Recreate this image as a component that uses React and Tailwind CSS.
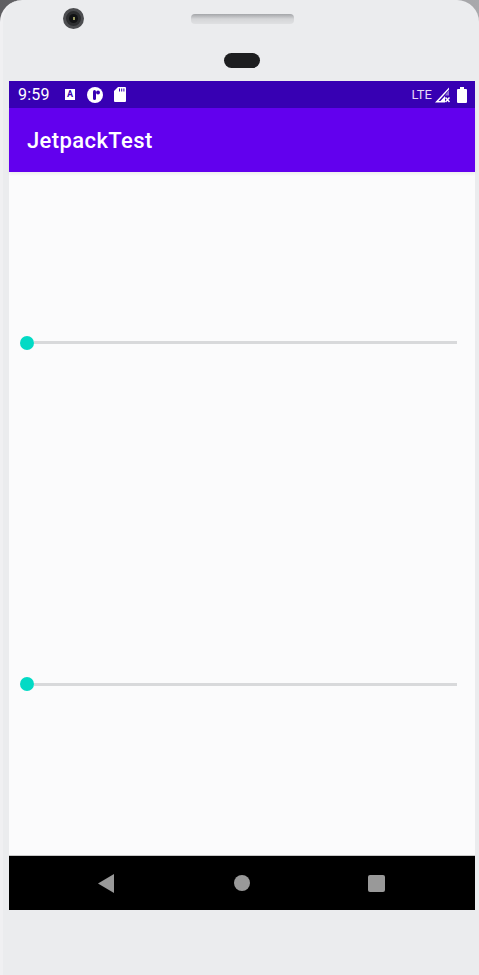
export default function App() {
  return (
    <div className="w-[479px] h-[975px] overflow-hidden bg-gradient-to-r from-[#5f5f62] to-[#a9a9ac] font-['Roboto',sans-serif]">
      <div className="flex flex-col h-full rounded-t-[22px] bg-[#ebecee] border-l-[3px] border-[#f0f0f2]">
        <TopBezel />
        {/* device screen */}
        <div className="flex flex-col h-[829px] ml-[6px] mr-[4px]">
          <StatusBar />
          <div className="relative z-10 flex items-center h-[64px] pl-[18px] bg-[#6200ee] text-white text-[22px] font-medium tracking-[0.4px] shadow-[0_2px_3px_rgba(0,0,0,0.06)]">
            JetpackTest
          </div>
          <div className="flex flex-col flex-1 bg-[#fbfbfc]">
            <SliderRow />
            <SliderRow />
          </div>
          <NavBar />
        </div>
      </div>
    </div>
  );
}

function TopBezel() {
  return (
    <div className="flex flex-col items-center h-[81px] shrink-0">
      <div className="flex w-full h-[53px]">
        <div className="ml-[60px] mt-[8px] w-[21px] h-[21px] rounded-full bg-[#2c2d2f] border-[3px] border-[#4c4d50] flex items-center justify-center">
          <div className="w-[9px] h-[9px] rounded-full bg-[#111214] flex items-center justify-center">
            <div className="w-[2px] h-[3px] bg-[#9a9a60]" />
          </div>
        </div>
        <div className="ml-[107px] mt-[14px] w-[103px] h-[10px] rounded-[4px] bg-gradient-to-b from-[#a4a6a9] via-[#d5d6d8] to-[#dfe0e2]" />
      </div>
      <div className="w-[36px] h-[15px] ml-[2px] rounded-full bg-[#1d1e20]" />
    </div>
  );
}

function StatusBar() {
  return (
    <div className="flex items-center h-[27px] pl-[9px] pr-[8px] bg-[#3700b3] text-white">
      <span className="w-[47px] text-[16px] leading-none tracking-[0.2px]">9:59</span>
      {/* A notification */}
      <div className="flex items-center justify-center w-[10px] h-[11px] bg-white text-[#3700b3] text-[9px] font-bold leading-none">
        A
      </div>
      <svg className="ml-[12px]" width="16" height="16" viewBox="0 0 16 16">
        <circle cx="8" cy="8" r="8" fill="#fff" />
        <rect x="6" y="3" width="3" height="10" rx="1.5" fill="#3700b3" />
        <circle cx="11" cy="5.5" r="2" fill="#3700b3" />
      </svg>
      <svg className="ml-[11px]" width="12" height="15" viewBox="0 0 12 15">
        <path d="M4 0h7a1 1 0 0 1 1 1v13a1 1 0 0 1-1 1H1a1 1 0 0 1-1-1V4z" fill="#fff" />
        <path d="M5 1.5h1v3H5zM7.2 1.5h1v3h-1zM9.4 1.5h1v3h-1z" fill="#3700b3" />
      </svg>
      <span className="ml-auto text-[13px] leading-none text-[#e4daf7]">LTE</span>
      <svg className="ml-[3px]" width="15" height="16" viewBox="0 0 15 16">
        <path d="M0 15.5 14 0.5V2.5L3.5 14H10v1.5zM5.5 14 10 9v5z" fill="#fff" />
        <path d="M10 8.5 14 3v5.5z" fill="#8f70d6" />
        <path d="M10.5 10.5l4 4.5M14.5 10.5l-4 4.5" stroke="#fff" strokeWidth="1.5" />
      </svg>
      <svg className="ml-[7px]" width="10" height="16" viewBox="0 0 10 16">
        <path d="M3 0h4v2h2a1 1 0 0 1 1 1v12a1 1 0 0 1-1 1H1a1 1 0 0 1-1-1V3a1 1 0 0 1 1-1h2z" fill="#fff" />
      </svg>
    </div>
  );
}

function SliderRow() {
  return (
    <div className="flex flex-1 items-center pl-[11px] pr-[18px]">
      <div className="w-[14px] h-[14px] rounded-full bg-[#03dac5] shrink-0" />
      <div className="flex-1 h-[3px] bg-[#d8d9db]" />
    </div>
  );
}

function NavBar() {
  return (
    <div className="flex items-center h-[55px] shrink-0 pl-[89px] bg-black border-t border-[#c8c8c8]">
      <svg width="16" height="19" viewBox="0 0 16 19">
        <path d="M16 0v19L0 9.5z" fill="#999" />
      </svg>
      <div className="ml-[120px] w-[16px] h-[16px] rounded-full bg-[#999]" />
      <div className="ml-[118px] w-[17px] h-[17px] rounded-[2px] bg-[#999]" />
    </div>
  );
}
